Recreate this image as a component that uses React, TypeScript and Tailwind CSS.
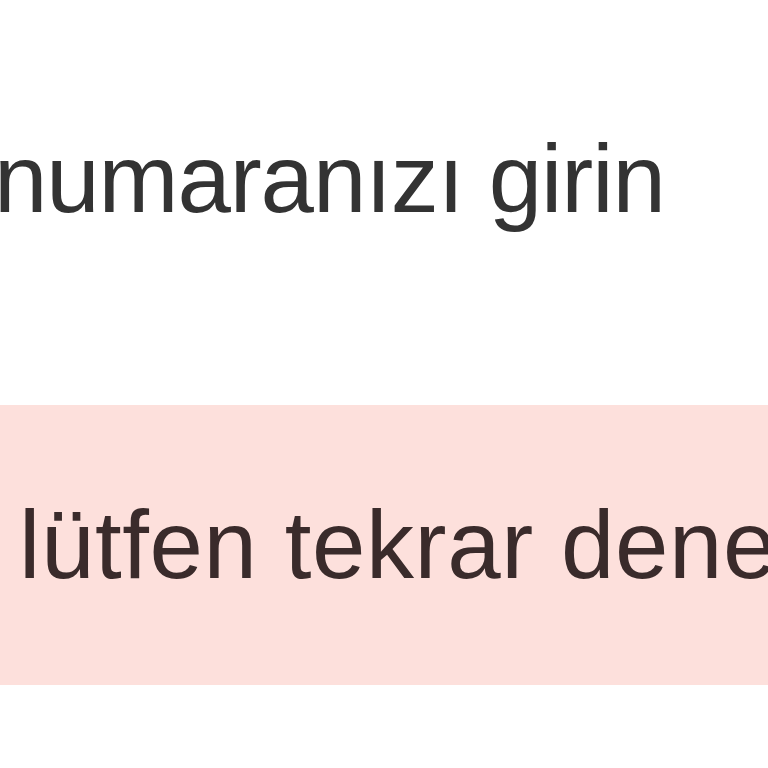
export default function App() {
  return (
    <div className="w-[768px] h-[768px] overflow-hidden bg-white font-['Liberation_Sans',Arial,sans-serif]">
      <p className="mt-[131px] -ml-[6px] text-[96px] leading-none tracking-[-1.1px] text-[#333333] whitespace-nowrap">
        numaranızı girin
      </p>
      <div className="mt-[178px] h-[280px] w-full bg-[#fde0dc] flex items-center pl-[19px]">
        <p className="text-[96px] leading-none tracking-[0.6px] text-[#3a2b2b] whitespace-nowrap">
          lütfen tekrar dene
        </p>
      </div>
    </div>
  );
}
